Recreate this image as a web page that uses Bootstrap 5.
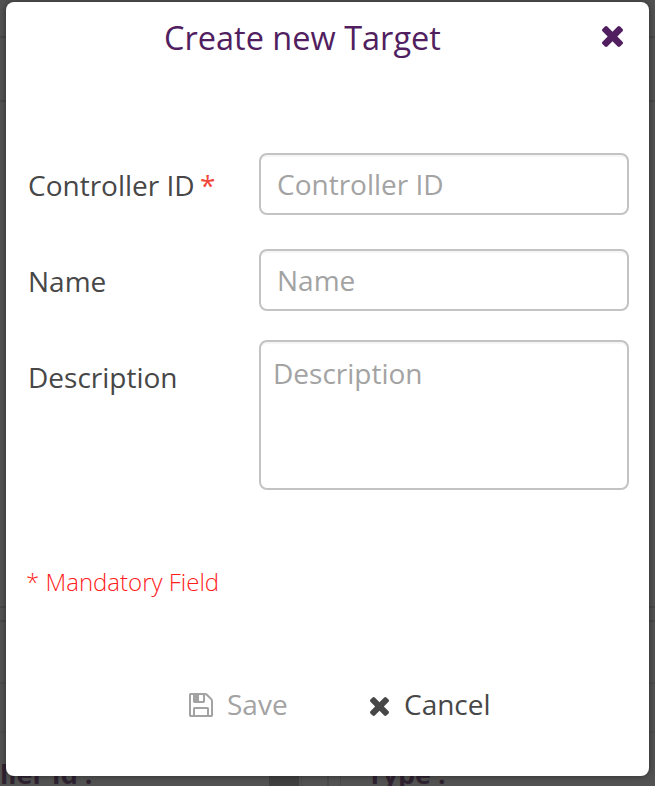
<!DOCTYPE html>
<html lang="en">
<head>
<meta charset="utf-8">
<meta name="viewport" content="width=device-width, initial-scale=1">
<title>Create new Target</title>
<link href="https://cdn.jsdelivr.net/npm/bootstrap@5.3.0/dist/css/bootstrap.min.css" rel="stylesheet">
<style>
  body { height: 786px; background: #525252; font-family: "Open Sans", sans-serif; color: #474747; }
  .page-back { inset: 0; }
  .page-back .band { border-bottom: 2px solid #484848; flex: none; }
  .band-a { height: 38px; } .band-b { height: 64px; } .band-c { height: 506px; }
  .band-d { height: 14px; } .band-e { height: 62px; } .band-f { height: 49px; }
  .page-back .faint { border-bottom-color: #4d4d4d; }
  .back-foot { height: 53px; padding-top: 20px; font: 700 27px/42px "Open Sans", sans-serif; color: #2f2230; }
  .foot-left { width: 269px; } .foot-bar { width: 30px; background: #404040; }
  .foot-edge { width: 3px; border-right: 1px solid #4a4a4a; }
  .foot-gap { width: 27px; border-right: 2px solid #494949; } .foot-gap2 { width: 12px; border-right: 1px solid #494949; }
  .foot-right { padding-left: 26px; }
  .target-dialog { width: 643px; margin: 2px 6px 10px; height: 774px; border: 0; border-radius: 8px; box-shadow: 0 0 6px rgba(0,0,0,.45); }
  .dialog-head { height: 151px; padding: 11px 26px 0 158px; color: #511e60; }
  .dialog-title { font-size: 32.5px; line-height: 50px; font-weight: 400; }
  .close-btn { margin-top: 13px; height: 21px; line-height: 0; color: #511e60; }
  .form-line { padding-left: 22px; padding-right: 20px; }
  .field-name { width: 231px; font-size: 28px; line-height: 60px; padding: 2px 0 0; white-space: nowrap; }
  .required { color: #f0473b; margin-left: -2px; }
  .target-input { width: 370px; border: 2px solid #c3c3c3; border-radius: 8px; box-shadow: inset 0 2px 0 #f6f6f6; font-size: 28px; color: #474747; line-height: 42px; }
  .target-input::placeholder { color: #a3a3a3; opacity: 1; }
  input.target-input { height: 62px; padding: 8px 16px 8px; }
  textarea.target-input { height: 150px; padding: 10px 12px; resize: none; }
  .line-gap { margin-bottom: 34px; }
  .area-gap { margin-top: 29px; }
  .area-name { padding-top: 7px; }
  .mandatory { margin-top: 74px; padding-left: 20px; font-size: 24px; line-height: 36px; font-weight: 300; color: #ff1c1c; }
  .dialog-actions { margin-top: 83px; padding-left: 183px; }
  .action-btn { font-size: 28px; line-height: 42px; color: #474747; }
  .save-btn { width: 180.5px; color: #a3a3a3; }
  .save-btn svg { margin-right: 14px; margin-top: 2px; }
  .cancel-btn svg { margin-right: 15.5px; margin-top: 4px; }
</style>
</head>
<body class="position-relative overflow-hidden">
<div class="page-back position-absolute d-flex flex-column z-0" aria-hidden="true">
  <div class="band band-a"></div><div class="band band-b"></div><div class="band band-c"></div>
  <div class="band band-d"></div><div class="band band-e faint"></div><div class="band band-f faint"></div>
  <div class="back-foot d-flex overflow-hidden">
    <div class="foot-left">ller Id :</div><div class="foot-bar"></div><div class="foot-edge"></div><div class="foot-gap"></div><div class="foot-gap2"></div>
    <div class="foot-right">Type :</div>
  </div>
</div>
<form class="target-dialog modal-content position-relative z-1 bg-white d-flex flex-column">
  <header class="dialog-head d-flex justify-content-between align-items-start">
    <h1 class="dialog-title m-0">Create new Target</h1>
    <button type="button" class="close-btn btn p-0 border-0" aria-label="Close">
      <svg width="21" height="21" viewBox="302 366 1188 1188" fill="currentColor"><path id="cross" d="M1490 1322q0 40-28 68l-136 136q-28 28-68 28t-68-28l-294-294-294 294q-28 28-68 28t-68-28l-136-136q-28-28-28-68t28-68l294-294-294-294q-28-28-28-68t28-68l136-136q28-28 68-28t68 28l294 294 294-294q28-28 68-28t68 28l136 136q28 28 28 68t-28 68l-294 294 294 294q28 28 28 68z"/></svg>
    </button>
  </header>
  <div class="form-line line-gap d-flex">
    <label class="field-name" for="controller">Controller ID <span class="required">*</span></label>
    <input id="controller" class="target-input form-control" placeholder="Controller ID">
  </div>
  <div class="form-line d-flex">
    <label class="field-name" for="name">Name</label>
    <input id="name" class="target-input form-control" placeholder="Name">
  </div>
  <div class="form-line area-gap d-flex">
    <label class="field-name area-name" for="description">Description</label>
    <textarea id="description" class="target-input form-control" placeholder="Description"></textarea>
  </div>
  <div class="mandatory">* Mandatory Field</div>
  <footer class="dialog-actions d-flex">
    <button type="button" class="action-btn save-btn btn p-0 border-0 d-flex align-items-center">
      <svg width="24" height="24" viewBox="128 128 1536 1536" fill="currentColor"><path d="M512 1536h768v-384h-768v384zm896 0h128v-896q0-14-10-38.5t-20-34.5l-281-281q-10-10-34-20t-39-10v416q0 40-28 68t-68 28h-576q-40 0-68-28t-28-68v-416h-128v1280h128v-416q0-40 28-68t68-28h832q40 0 68 28t28 68v416zm-384-928v-320q0-13-9.5-22.5t-22.5-9.5h-192q-13 0-22.5 9.5t-9.5 22.5v320q0 13 9.5 22.5t22.5 9.5h192q13 0 22.5-9.5t9.5-22.5zm640 32v928q0 40-28 68t-68 28h-1344q-40 0-68-28t-28-68v-1344q0-40 28-68t68-28h928q40 0 88 20t76 48l280 280q28 28 48 76t20 88z"/></svg>
      Save
    </button>
    <button type="button" class="action-btn cancel-btn btn p-0 border-0 d-flex align-items-center">
      <svg width="19" height="19" viewBox="302 366 1188 1188" fill="currentColor"><use href="#cross"/></svg>
      Cancel
    </button>
  </footer>
</form>
<script src="https://cdn.jsdelivr.net/npm/bootstrap@5.3.0/dist/js/bootstrap.bundle.min.js"></script>
</body>
</html>
